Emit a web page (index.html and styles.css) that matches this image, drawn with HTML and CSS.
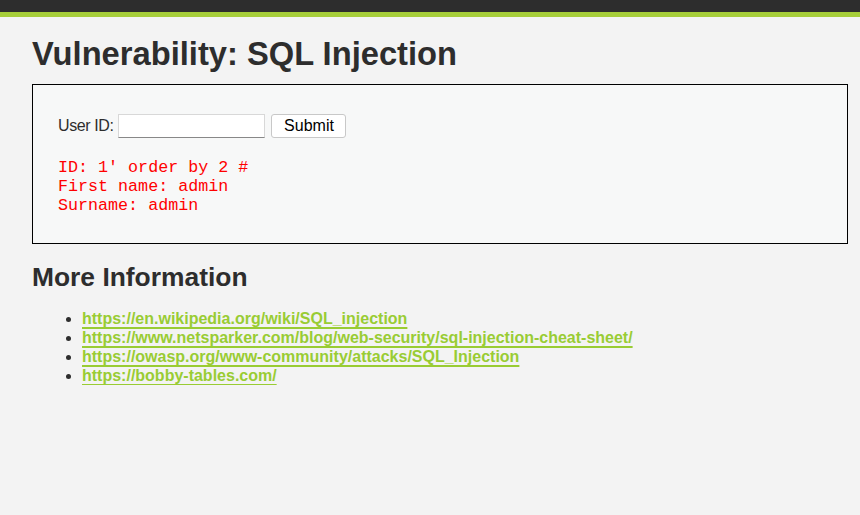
FILE: index.html
```html
<!DOCTYPE html>
<html>
<head>
<meta charset="utf-8">
<link rel="stylesheet" href="styles.css">
</head>
<body>
<div class="header"></div>
<div class="main">
  <h1 class="title">Vulnerability: SQL Injection</h1>
  <div class="vulnerable">
    <form class="form">
      <label class="label">User ID:</label>
      <input class="input" type="text">
      <button class="submit" type="button">Submit</button>
    </form>
    <pre class="result">ID: 1' order by 2 #
First name: admin
Surname: admin</pre>
  </div>
  <h2 class="subtitle">More Information</h2>
  <ul class="links">
    <li><a href="#">https://en.wikipedia.org/wiki/SQL_injection</a></li>
    <li><a href="#">https://www.netsparker.com/blog/web-security/sql-injection-cheat-sheet/</a></li>
    <li><a href="#">https://owasp.org/www-community/attacks/SQL_Injection</a></li>
    <li><a href="#">https://bobby-tables.com/</a></li>
  </ul>
</div>
</body>
</html>
```
FILE: styles.css
```css
html, body {
  margin: 0;
  padding: 0;
  background: #f3f3f3;
  font-family: "Liberation Sans", Arial, sans-serif;
  color: #2d2d2d;
}
.header {
  height: 12px;
  background: #2d2d2d;
  border-bottom: 5px solid #a6ce39;
}
.main {
  padding: 0 12px 0 32px;
}
.title {
  margin: 18px 0 0 0;
  font-size: 32.7px;
  line-height: 37px;
  font-weight: bold;
}
.vulnerable {
  margin-top: 12px;
  border: 1px solid #000;
  background: #f7f8f8;
  padding: 29px 25px 28px 25px;
}
.form {
  display: flex;
  align-items: center;
  margin: 0;
  font-size: 16px;
  letter-spacing: -0.4px;
}
.label {
  margin-right: 5px;
}
.input {
  width: 141px;
  height: 20px;
  padding: 1px 2px;
  margin: 0 6px 0 0;
  border: 1px solid #d8d8d8;
  border-bottom-color: #888;
  background: #fff;
  font-size: 14px;
}
.submit {
  height: 24px;
  width: 75px;
  padding: 0;
  border: 1px solid #c8c8c8;
  border-radius: 3px;
  background: #fff;
  color: #000;
  font-family: "Liberation Sans", Arial, sans-serif;
  font-size: 16px;
}
.result {
  margin: 20px 0 0 0;
  color: #f00;
  font-family: "Liberation Mono", "Courier New", monospace;
  font-size: 16.7px;
  line-height: 19px;
}
.subtitle {
  margin: 17px 0 0 0;
  font-size: 26.4px;
  line-height: 32px;
}
.links {
  margin: 16px 0 0 0;
  padding-left: 50px;
  font-size: 16px;
  line-height: 19px;
}
.links a {
  color: #99cc33;
  font-weight: bold;
  text-decoration: underline;
  text-decoration-thickness: 2px;
  text-underline-offset: 3px;
}
```
